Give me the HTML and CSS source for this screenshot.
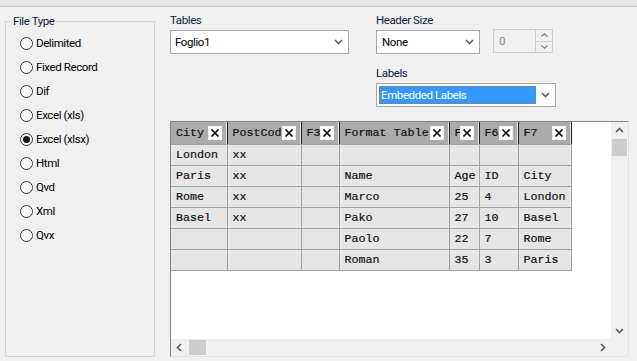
FILE: index.html
```html
<!DOCTYPE html>
<html lang="en">
<head>
    <meta charset="UTF-8">
    <title>File Wizard - Type</title>
    <link rel="stylesheet" href="styles.css">
</head>
<body>
    <div class="topbar"></div>

    <div class="main">
        <fieldset class="filetype">
            <legend>File Type</legend>
            <div class="radios">
                <div class="radio"><span class="circle"></span>Delimited</div>
                <div class="radio"><span class="circle"></span>Fixed Record</div>
                <div class="radio"><span class="circle"></span>Dif</div>
                <div class="radio"><span class="circle"></span>Excel (xls)</div>
                <div class="radio"><span class="circle checked"></span>Excel (xlsx)</div>
                <div class="radio"><span class="circle"></span>Html</div>
                <div class="radio"><span class="circle"></span>Qvd</div>
                <div class="radio"><span class="circle"></span>Xml</div>
                <div class="radio"><span class="circle"></span>Qvx</div>
            </div>
        </fieldset>

        <div class="panel">
            <div class="controls">
                <div class="field">
                    <div class="label">Tables</div>
                    <div class="combo combo-tables">
                        <span class="combo-text">Foglio1</span>
                        <svg class="chev" width="9" height="6" viewBox="0 0 9 6"><polyline points="1,1 4.5,4.5 8,1"/></svg>
                    </div>
                </div>
                <div class="field">
                    <div class="label">Header Size</div>
                    <div class="row">
                        <div class="combo combo-header">
                            <span class="combo-text">None</span>
                            <svg class="chev" width="9" height="6" viewBox="0 0 9 6"><polyline points="1,1 4.5,4.5 8,1"/></svg>
                        </div>
                        <div class="spinner">
                            <span class="spin-value">0</span>
                            <div class="spin-btns">
                                <div class="spin-btn">
                                    <svg width="7" height="4" viewBox="0 0 7 4"><polyline points="0.5,3.5 3.5,0.8 6.5,3.5"/></svg>
                                </div>
                                <div class="spin-btn">
                                    <svg width="7" height="4" viewBox="0 0 7 4"><polyline points="0.5,0.5 3.5,3.2 6.5,0.5"/></svg>
                                </div>
                            </div>
                        </div>
                    </div>
                    <div class="label label-gap">Labels</div>
                    <div class="combo combo-labels">
                        <span class="combo-sel">Embedded Labels</span>
                        <svg class="chev" width="9" height="6" viewBox="0 0 9 6"><polyline points="1,1 4.5,4.5 8,1"/></svg>
                    </div>
                </div>
            </div>

            <div class="grid-frame">
                <div class="viewport">
                    <table class="preview">
                        <colgroup>
                            <col style="width:56px">
                            <col style="width:74px">
                            <col style="width:38px">
                            <col style="width:110px">
                            <col style="width:30px">
                            <col style="width:39px">
                            <col style="width:53px">
                        </colgroup>
                        <thead>
                            <tr>
                                <th><div class="hcell"><span class="htext">City</span><span class="xbox"><svg width="10" height="10" viewBox="0 0 10 10"><path d="M1.5 1.5L8.5 8.5M8.5 1.5L1.5 8.5"/></svg></span></div></th>
                                <th><div class="hcell"><span class="htext">PostCod</span><span class="xbox"><svg width="10" height="10" viewBox="0 0 10 10"><path d="M1.5 1.5L8.5 8.5M8.5 1.5L1.5 8.5"/></svg></span></div></th>
                                <th><div class="hcell"><span class="htext">F3</span><span class="xbox"><svg width="10" height="10" viewBox="0 0 10 10"><path d="M1.5 1.5L8.5 8.5M8.5 1.5L1.5 8.5"/></svg></span></div></th>
                                <th><div class="hcell"><span class="htext">Format Table</span><span class="xbox"><svg width="10" height="10" viewBox="0 0 10 10"><path d="M1.5 1.5L8.5 8.5M8.5 1.5L1.5 8.5"/></svg></span></div></th>
                                <th><div class="hcell"><span class="htext">F5</span><span class="xbox"><svg width="10" height="10" viewBox="0 0 10 10"><path d="M1.5 1.5L8.5 8.5M8.5 1.5L1.5 8.5"/></svg></span></div></th>
                                <th><div class="hcell"><span class="htext">F6</span><span class="xbox"><svg width="10" height="10" viewBox="0 0 10 10"><path d="M1.5 1.5L8.5 8.5M8.5 1.5L1.5 8.5"/></svg></span></div></th>
                                <th><div class="hcell"><span class="htext">F7</span><span class="xbox"><svg width="10" height="10" viewBox="0 0 10 10"><path d="M1.5 1.5L8.5 8.5M8.5 1.5L1.5 8.5"/></svg></span></div></th>
                            </tr>
                        </thead>
                        <tbody>
                            <tr><td>London</td><td>xx</td><td></td><td></td><td></td><td></td><td></td></tr>
                            <tr><td>Paris</td><td>xx</td><td></td><td>Name</td><td>Age</td><td>ID</td><td>City</td></tr>
                            <tr><td>Rome</td><td>xx</td><td></td><td>Marco</td><td>25</td><td>4</td><td>London</td></tr>
                            <tr><td>Basel</td><td>xx</td><td></td><td>Pako</td><td>27</td><td>10</td><td>Basel</td></tr>
                            <tr><td></td><td></td><td></td><td>Paolo</td><td>22</td><td>7</td><td>Rome</td></tr>
                            <tr><td></td><td></td><td></td><td>Roman</td><td>35</td><td>3</td><td>Paris</td></tr>
                        </tbody>
                    </table>
                </div>
                <div class="vscroll">
                    <svg class="arrow" width="9" height="6" viewBox="0 0 9 6"><polyline points="1,5 4.5,1.5 8,5"/></svg>
                    <div class="vthumb"></div>
                    <div class="spacer"></div>
                    <svg class="arrow" width="9" height="6" viewBox="0 0 9 6"><polyline points="1,1 4.5,4.5 8,1"/></svg>
                </div>
                <div class="hscroll">
                    <svg class="arrow" width="6" height="9" viewBox="0 0 6 9"><polyline points="5,1 1.5,4.5 5,8"/></svg>
                    <div class="hthumb"></div>
                    <div class="spacer"></div>
                    <svg class="arrow" width="6" height="9" viewBox="0 0 6 9"><polyline points="1,1 4.5,4.5 1,8"/></svg>
                </div>
                <div class="corner"></div>
            </div>
        </div>
    </div>
</body>
</html>
```

FILE: styles.css
```css
body {
    margin: 0;
    background-color: #f0f0f0;
    font-family: Roboto, "Liberation Sans", sans-serif;
    font-size: 11.5px;
    letter-spacing: -0.4px;
    color: #000;
    overflow: hidden;
}
.topbar {
    height: 6px;
    background-color: #e6e6e6;
    border-bottom: 1px solid #c8c8c8;
}
.main {
    display: flex;
    align-items: flex-start;
}

/* left group box */
.filetype {
    box-sizing: border-box;
    width: 150px;
    height: 343px;
    margin: 7px 0 0 5px;
    padding: 0 0 0 6px;
    border: 1px solid #d5d5d5;
}
.filetype legend {
    padding: 0 1px;
    line-height: 14px;
    color: #0c1c4a;
}
.radios {
    padding: 3px 0 0 8px;
}
.radio {
    display: flex;
    align-items: center;
    height: 24px;
}
.circle {
    box-sizing: border-box;
    width: 13px;
    height: 13px;
    margin-right: 3px;
    border: 1px solid #333;
    border-radius: 50%;
    background-color: #fff;
    display: flex;
    align-items: center;
    justify-content: center;
}
.circle.checked::after {
    content: "";
    width: 7px;
    height: 7px;
    border-radius: 50%;
    background-color: #1a1a1a;
}

/* right side */
.panel {
    margin-left: 15px;
    padding-top: 6px;
}
.controls {
    display: flex;
    gap: 27px;
}
.label {
    line-height: 15px;
    color: #0c1c4a;
    margin-bottom: 2px;
}
.label-gap {
    margin-top: 12px;
}
.row {
    display: flex;
    align-items: flex-start;
}
.combo {
    box-sizing: border-box;
    height: 24px;
    background-color: #fff;
    border: 1px solid #a9a9a9;
    display: flex;
    align-items: center;
    padding: 0 5px 0 4px;
}
.combo-text {
    flex: 1;
}
.chev polyline,
.arrow polyline {
    fill: none;
    stroke: #606060;
    stroke-width: 1.7;
}
.combo-tables {
    width: 179px;
}
.combo-header {
    width: 104px;
    padding-left: 5px;
}
.combo-labels {
    width: 180px;
    padding: 0 5px 0 2px;
}
.combo-sel {
    flex: 1;
    height: 18px;
    line-height: 18px;
    margin-right: 5px;
    padding-left: 2px;
    background-color: #3399ff;
    color: #fff;
    outline: 1px dotted #b07040;
    outline-offset: -1px;
}

.spinner {
    box-sizing: border-box;
    width: 60px;
    height: 24px;
    margin: -1px 0 0 13px;
    border: 1px solid #cfcfcf;
    display: flex;
}
.spin-value {
    flex: 1;
    line-height: 22px;
    padding-left: 5px;
    color: #8a8a8a;
}
.spin-btns {
    width: 17px;
    display: flex;
    flex-direction: column;
}
.spin-btn {
    flex: 1;
    border-left: 1px solid #cfcfcf;
    border-top: 1px solid #cfcfcf;
    display: flex;
    align-items: center;
    justify-content: center;
}
.spin-btn:first-child {
    border-top: none;
}
.spin-btn polyline {
    fill: none;
    stroke: #8a8a8a;
    stroke-width: 1.3;
}

/* preview grid */
.grid-frame {
    box-sizing: border-box;
    width: 459px;
    height: 236px;
    margin-top: 14px;
    border: 1px solid;
    border-color: #828282 #e3e3e3 #e3e3e3 #828282;
    display: grid;
    grid-template-columns: 1fr 17px;
    grid-template-rows: 1fr 17px;
}
.viewport {
    background-color: #fff;
    overflow: hidden;
}
.preview {
    table-layout: fixed;
    border-collapse: collapse;
    width: 400px;
    font-family: "Liberation Mono", "Courier New", monospace;
    font-size: 11.7px;
    letter-spacing: 0;
    color: #111;
    -webkit-text-stroke: 0.2px #111;
}
.preview th {
    height: 22px;
    padding: 0;
    background-color: #ababab;
    border-right: 1px solid #1e1e1e;
    border-bottom: 1px solid #a0a0a0;
    box-shadow: inset -1px 0 0 #e8e8e8;
    font-weight: normal;
    text-align: left;
}
.hcell {
    display: flex;
    align-items: center;
    padding: 0 5px 0 5px;
}
.htext {
    flex: 1;
    min-width: 0;
    white-space: nowrap;
}
.xbox {
    box-sizing: border-box;
    flex: none;
    width: 14px;
    height: 14px;
    background-color: #fff;
    border: 1px solid #f4f4f4;
    display: flex;
    align-items: center;
    justify-content: center;
}
.xbox path {
    stroke: #000;
    stroke-width: 1.7;
}
.preview td {
    height: 20px;
    padding: 0 0 0 5px;
    background-color: #e6e6e6;
    border: 1px solid #a0a0a0;
    white-space: nowrap;
    overflow: hidden;
}
.preview td:first-child {
    border-left: none;
}

.vscroll,
.hscroll {
    background-color: #f0f0f0;
    display: flex;
    align-items: center;
}
.vscroll {
    flex-direction: column;
    padding: 5px 0;
}
.hscroll {
    padding: 0 5px;
}
.spacer {
    flex: 1;
}
.vthumb {
    width: 15px;
    height: 17px;
    margin-top: 6px;
    background-color: #cdcdcd;
}
.hthumb {
    width: 17px;
    height: 15px;
    margin-left: 7px;
    background-color: #cdcdcd;
}
.corner {
    background-color: #f0f0f0;
}
```
